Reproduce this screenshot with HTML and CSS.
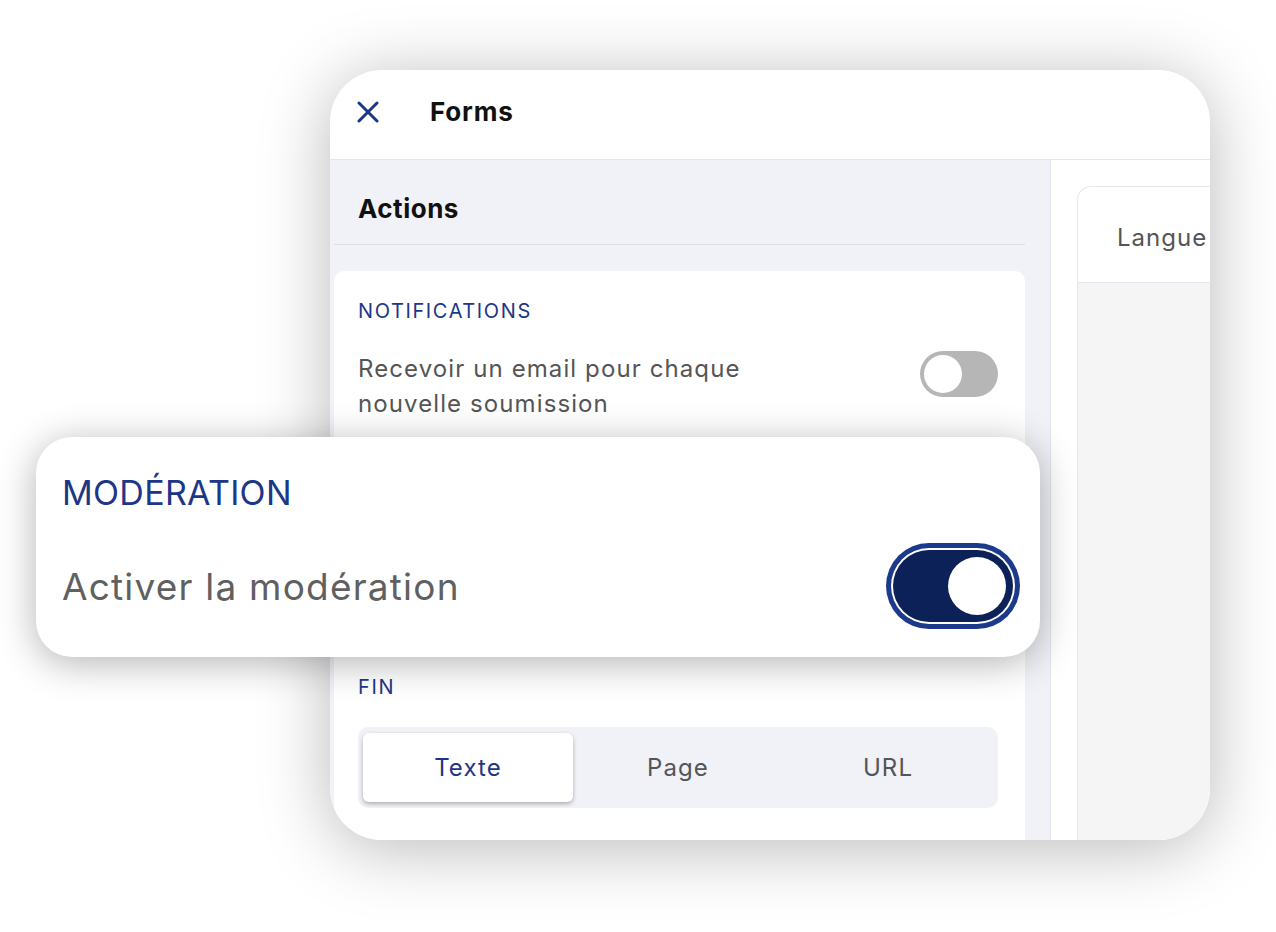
FILE: index.html
```html
<!DOCTYPE html>
<html lang="fr">

<head>
    <meta charset="UTF-8">
    <meta name="viewport" content="width=device-width, initial-scale=1.0">
    <title>Forms</title>

    <link rel="stylesheet" href="styles.css">
</head>

<body>
    <div class="stage">

        <div class="window">
            <header class="window__header">
                <svg class="window__close" width="22" height="22" viewBox="0 0 22 22">
                    <path d="M2 2 L20 20 M20 2 L2 20" stroke="#1d3787" stroke-width="3" stroke-linecap="round" fill="none" />
                </svg>
                <span class="window__title">Forms</span>
            </header>

            <div class="window__body">
                <aside class="sidebar">
                    <h2 class="sidebar__title">Actions</h2>

                    <div class="panel">
                        <section class="panel__section">
                            <div class="panel__label">NOTIFICATIONS</div>
                            <div class="panel__row">
                                <span class="panel__text">Recevoir un email pour chaque nouvelle soumission</span>
                                <span class="toggle"><span class="toggle__knob"></span></span>
                            </div>
                        </section>

                        <!-- caché sous la carte agrandie -->
                        <section class="panel__section panel__section--covered">
                            <div class="panel__label">MODÉRATION</div>
                            <div class="panel__row">
                                <span class="panel__text">Activer la modération</span>
                                <span class="toggle toggle--on"><span class="toggle__knob"></span></span>
                            </div>
                        </section>

                        <section class="panel__section">
                            <div class="panel__label">FIN</div>
                            <div class="segmented">
                                <span class="segmented__item segmented__item--active">Texte</span>
                                <span class="segmented__item">Page</span>
                                <span class="segmented__item">URL</span>
                            </div>
                        </section>
                    </div>
                </aside>

                <main class="preview">
                    <div class="preview__card">
                        <div class="preview__head">Langue</div>
                        <div class="preview__content"></div>
                    </div>
                </main>
            </div>
        </div>

        <!-- zoom sur le bloc modération -->
        <div class="focus">
            <div class="focus__label">MODÉRATION</div>
            <div class="focus__row">
                <span class="focus__text">Activer la modération</span>
                <span class="big-toggle"><span class="big-toggle__knob"></span></span>
            </div>
        </div>

    </div>
</body>

</html>
```

FILE: styles.css
```css
html,
body {
    margin: 0;
    background-color: #fff;
    font-family: Inter, "Noto Sans", sans-serif;
}

body {
    width: 1276px;
    height: 932px;
    overflow: hidden;
}

.stage {
    position: relative;
    padding: 70px 0 0 330px;
}

.window {
    width: 880px;
    height: 770px;
    border-radius: 52px;
    overflow: hidden;
    background-color: #fff;
    box-shadow: 0 8px 70px rgba(0, 0, 0, .28);
    display: flex;
    flex-direction: column;
}

.window__header {
    height: 90px;
    flex-shrink: 0;
    box-sizing: border-box;
    padding: 0 0 6px 27px;
    border-bottom: 1px solid #e6e7ee;
    display: flex;
    align-items: center;
    gap: 51px;
}

.window__close {
    display: block;
}

.window__title {
    font-size: 26px;
    font-weight: 700;
    color: #111;
    letter-spacing: .8px;
}

.window__body {
    flex: 1;
    display: flex;
    min-height: 0;
}

/* colonne de gauche */
.sidebar {
    width: 691px;
    padding: 0 25px 0 4px;
    background-color: #f0f2f7;
    border-right: 1px solid #e2e4eb;
}

.sidebar__title {
    margin: 0;
    padding: 33px 24px 19px;
    line-height: 32px;
    font-size: 26px;
    font-weight: 700;
    letter-spacing: .5px;
    color: #111;
    border-bottom: 1px solid #dcdee4;
}

.panel {
    margin-top: 26px;
    background-color: #fff;
    border-radius: 10px;
    padding: 28px 27px 40px 24px;
    display: flex;
    flex-direction: column;
    gap: 78px;
}

.panel__section--covered {
    visibility: hidden;
}

.panel__label {
    font-size: 20px;
    line-height: 24px;
    letter-spacing: 1.6px;
    color: #1d3787;
    margin-bottom: 28px;
}

.panel__row {
    display: flex;
    justify-content: space-between;
    align-items: flex-start;
}

.panel__text {
    max-width: 430px;
    font-size: 24px;
    line-height: 35px;
    letter-spacing: 1.1px;
    color: #555;
}

.toggle {
    width: 78px;
    height: 46px;
    border-radius: 23px;
    background-color: #b6b6b6;
    padding: 4px;
    box-sizing: border-box;
    display: flex;
}

.toggle__knob {
    width: 38px;
    height: 38px;
    border-radius: 50%;
    background-color: #fff;
}

.toggle--on {
    background-color: #0c2157;
    justify-content: flex-end;
}

.segmented {
    display: flex;
    padding: 6px 5px;
    background-color: #f0f2f7;
    border-radius: 10px;
}

.segmented__item {
    flex: 1;
    height: 69px;
    display: flex;
    align-items: center;
    justify-content: center;
    font-size: 24px;
    letter-spacing: 1.1px;
    color: #555;
    border-radius: 6px;
}

.segmented__item--active {
    background-color: #fff;
    color: #1d3787;
    box-shadow: 0 2px 4px rgba(0, 0, 0, .28);
}

/* colonne de droite */
.preview {
    flex: 1;
    padding: 26px 0 0 26px;
    background-color: #fff;
}

.preview__card {
    height: 100%;
    box-sizing: border-box;
    border: 1px solid #e4e7ee;
    border-right: none;
    border-bottom: none;
    border-top-left-radius: 14px;
    overflow: hidden;
    display: flex;
    flex-direction: column;
}

.preview__head {
    height: 96px;
    flex-shrink: 0;
    box-sizing: border-box;
    padding: 5px 0 0 39px;
    display: flex;
    align-items: center;
    font-size: 24px;
    letter-spacing: 1px;
    color: #555;
    white-space: nowrap;
    border-bottom: 1px solid #e4e7ee;
}

.preview__content {
    flex: 1;
    background-color: #f5f5f5;
}

/* carte agrandie posée par-dessus */
.focus {
    position: absolute;
    left: 36px;
    top: 437px;
    width: 1004px;
    box-sizing: border-box;
    padding: 35px 27px 35px 26px;
    background-color: #fff;
    border-radius: 36px;
    box-shadow: 0 6px 38px rgba(0, 0, 0, .3);
}

.focus__label {
    font-size: 34px;
    line-height: 41px;
    letter-spacing: .3px;
    color: #1d3787;
    margin-bottom: 37px;
}

.focus__row {
    display: flex;
    justify-content: space-between;
    align-items: center;
}

.focus__text {
    font-size: 37px;
    letter-spacing: 1.2px;
    color: #606060;
}

.big-toggle {
    width: 120px;
    height: 72px;
    border-radius: 36px;
    background-color: #0c2157;
    box-shadow: 0 0 0 2px #fff, 0 0 0 7px #1c3a8c;
    display: flex;
    justify-content: flex-end;
    align-items: center;
    padding: 0 7px;
    box-sizing: border-box;
}

.big-toggle__knob {
    width: 58px;
    height: 58px;
    border-radius: 50%;
    background-color: #fff;
}
```
